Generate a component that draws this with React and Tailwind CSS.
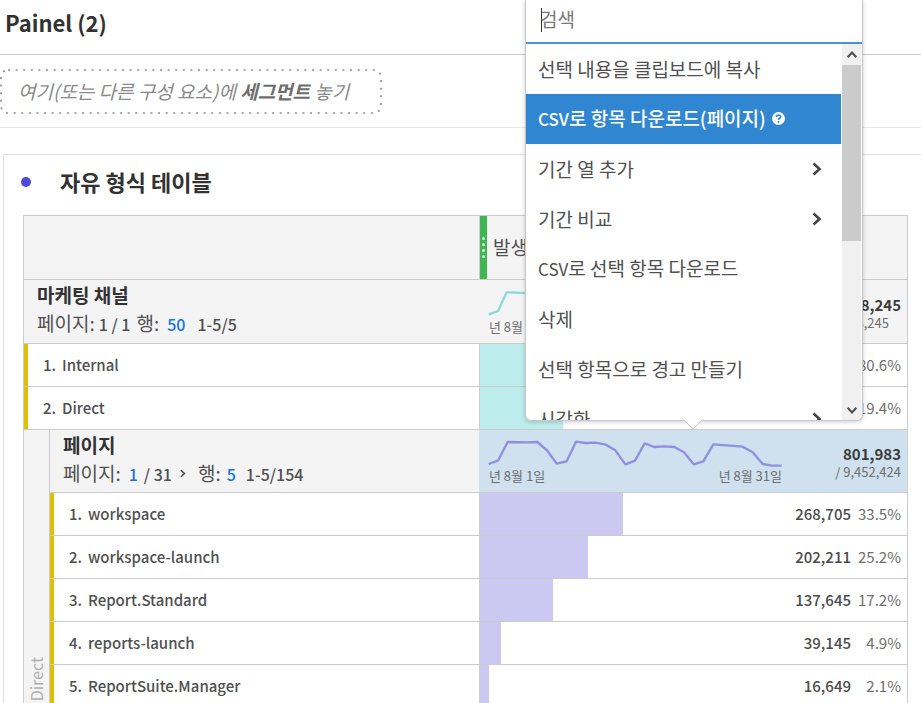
import React from 'react';

const LINE = 'border-[#cccccc]';

function Chevron({ className }) {
  return (
    <svg className={className} viewBox="0 0 10 14" fill="none" stroke="currentColor" strokeWidth="2.6" aria-hidden="true">
      <path d="M1.5 1.5 L7.5 7 L1.5 12.5" />
    </svg>
  );
}

function HelpIcon() {
  return (
    <svg className="h-[13px] w-[13px]" viewBox="0 0 13 13" aria-hidden="true">
      <circle cx="6.5" cy="6.5" r="6.5" fill="white" />
      <path d="M4.4 5 C4.4 2.4 8.7 2.5 8.6 4.9 C8.5 6.3 6.6 6.2 6.5 7.9" fill="none" stroke="#3186d2" strokeWidth="1.6" />
      <circle cx="6.5" cy="10" r="1" fill="#3186d2" />
    </svg>
  );
}

function ValueCell({ count, percent, color }) {
  return (
    <td className={`relative border-t border-l p-0 ${LINE}`}>
      <div className={`absolute inset-y-0 left-0 ${color}`} style={{ width: `${percent}%` }} />
      <div className="relative flex justify-end pr-1.5 text-[15px] leading-6">
        <span className="font-medium text-[#4b4b4b]">{count}</span>
        <span className="w-[50px] text-right text-[#6e6e6e]">{percent.toFixed(1)}%</span>
      </div>
    </td>
  );
}

function RowName({ index, name, colSpan }) {
  return (
    <th scope="row" colSpan={colSpan} className={`border-t border-l p-0 text-left font-medium ${LINE}`}>
      <div className="flex h-[42px] items-center border-l-4 border-[#e0bf00] text-[15px] leading-6">
        <span className="w-[34px] pr-1.5 text-right">{index}.</span>
        <span>{name}</span>
      </div>
    </th>
  );
}

function Trend({ points, color, total, outOf, outOfClass }) {
  return (
    <div className="flex justify-between pr-1.5 pb-1 pl-2">
      <div className="flex w-[294px] flex-col pt-1 text-[#6e6e6e]">
        <svg className="h-[30px] w-[294px]" viewBox="84 114 882 90" fill="none" stroke={color} strokeWidth="7" strokeLinejoin="round" aria-hidden="true">
          <polyline points={points} />
        </svg>
        <div className="flex justify-between pl-px text-[13px] leading-4">
          <span>년 8월 1일</span>
          <span>년 8월 31일</span>
        </div>
      </div>
      <div className="flex flex-col justify-end pb-1 text-right whitespace-nowrap">
        <span className="text-[15px] leading-5 font-bold text-[#3c3c3c]">{total}</span>
        <span className={`text-[13px] leading-4 text-[#6e6e6e] ${outOfClass}`}>{outOf}</span>
      </div>
    </div>
  );
}

const pageRows = [
  ['workspace', '268,705', 33.5],
  ['workspace-launch', '202,211', 25.2],
  ['Report.Standard', '137,645', 17.2],
  ['reports-launch', '39,145', 4.9],
  ['ReportSuite.Manager', '16,649', 2.1],
];

const menuItems = [
  { label: '선택 내용을 클립보드에 복사' },
  { format: 'CSV', label: '로 항목 다운로드(페이지)', active: true },
  { label: '기간 열 추가', sub: true },
  { label: '기간 비교', sub: true },
  { format: 'CSV', label: '로 선택 항목 다운로드' },
  { label: '삭제' },
  { label: '선택 항목으로 경고 만들기' },
  { label: '시각화', sub: true },
];

function ContextMenu() {
  return (
    <div className="absolute top-0 left-[525px] w-[338px] rounded-b-md border border-t-0 border-[#c8c8c8] bg-white shadow-[0_1px_4px_rgba(0,0,0,0.2)]">
      <div className="relative border-b-2 border-[#4a90e2]">
        <input
          aria-label="검색"
          placeholder="검색"
          className="block h-[42px] w-full bg-transparent px-[14px] pb-1.5 text-[19px] leading-6 text-[#505050] outline-none placeholder:text-[#7a7a7a]"
        />
        <span className="absolute top-2 left-[15px] h-6 w-px bg-[#333]" />
      </div>
      <div className="flex h-[376px] overflow-hidden rounded-b-md">
        <ul className="h-full flex-1 overflow-hidden" role="menu">
          {menuItems.map((item) => (
            <li key={item.label} role="none">
              <button
                type="button"
                role="menuitem"
                className={`flex h-[50px] w-full items-center justify-between pr-[19px] pl-3 text-left text-[19px] leading-6 ${
                  item.active ? 'bg-[#3186d2] font-medium text-white' : 'text-[#505050]'
                }`}
              >
                <span className="flex items-center gap-1.5 pb-px whitespace-nowrap">
                  <span>
                    {item.format && <span className="text-[17px] leading-6">{item.format}</span>}
                    {item.label}
                  </span>
                  {item.active && <HelpIcon />}
                </span>
                {item.sub && <Chevron className="h-[14px] w-[10px] text-[#444]" />}
              </button>
            </li>
          ))}
        </ul>
        <div className="mr-px ml-px flex w-[19px] flex-col bg-[#f0f0f0] text-[#505050]" aria-hidden="true">
          <div className="flex h-[21px] items-center justify-center">
            <Chevron className="h-[11px] w-2 -rotate-90" />
          </div>
          <div className="h-[176px] bg-[#cbcbcb]" />
          <div className="mt-auto flex h-5 items-center justify-center">
            <Chevron className="h-[11px] w-2 rotate-90" />
          </div>
        </div>
      </div>
      <svg className="absolute top-full left-[156px] -mt-px h-[11px] w-[22px]" viewBox="0 0 22 11" aria-hidden="true">
        <path d="M0 0 H22 V1 L19 2 L11 10 L3 2 L0 1 Z" fill="white" />
        <path d="M0 1 Q2 1 3 2 L11 10 L19 2 Q20 1 22 1" fill="none" stroke="#c8c8c8" />
      </svg>
    </div>
  );
}

export default function App() {
  return (
    <div className="relative h-screen overflow-hidden bg-white font-['Noto_Sans_CJK_KR',sans-serif] text-[#505050]">
      <header className="flex h-[55px] items-center border-b border-[#cccccc] pb-2.5 pl-[5px]">
        <h1 className="text-[22px] leading-8 font-bold text-[#323232]">Painel (2)</h1>
      </header>
      <div className="flex h-[73px] items-center border-b border-[#e8e8e8]">
        <div className="relative flex h-[45px] w-[382px] items-center pl-[18px] text-[19px] leading-6 whitespace-nowrap text-[#8a8a8a] italic">
          <svg className="absolute inset-0 h-full w-full" fill="none" aria-hidden="true">
            <rect x="1" y="1" width="380" height="43" rx="7" stroke="#8a8a8a" strokeWidth="1.6" strokeDasharray="2 5.6" />
          </svg>
          <p>
            여기(또는 다른 구성 요소)에 <strong className="font-bold text-[#6e6e6e]">세그먼트</strong> 놓기
          </p>
        </div>
      </div>

      <section className="mt-[26px] ml-[3px] border-t border-l border-[#e0e0e0] pr-[13px] pl-[19px]">
        <div className="flex h-[60px] items-center pb-1.5">
          <span className="-ml-[2px] h-[10px] w-[10px] rounded-full bg-[#4b4bd8]" />
          <h2 className="ml-[29px] pb-0.5 text-[22px] leading-8 font-bold text-[#323232]">자유 형식 테이블</h2>
        </div>

        <table className={`w-full table-fixed border-separate border-spacing-0 border-r border-b ${LINE}`}>
          <colgroup>
            <col className="w-[26px]" />
            <col />
            <col className="w-[428px]" />
          </colgroup>
          <thead>
            <tr className="h-16 bg-[#f4f4f4]">
              <td colSpan={2} className={`border-t border-l ${LINE}`} />
              <th scope="col" className={`border-t border-l p-0 text-left font-normal ${LINE}`}>
                <div className="flex h-[63px] items-center text-[19px] leading-6">
                  <span className="flex h-full w-[7px] flex-col items-center justify-center gap-[3px] bg-[#40b551]">
                    {[0, 1, 2, 3].map((dot) => (
                      <span key={dot} className="h-[3px] w-[3px] rounded-full bg-[#d5f5d9]" />
                    ))}
                  </span>
                  <span className="ml-1.5 pb-0.5">발생</span>
                </div>
              </th>
            </tr>
          </thead>
          <tbody>
            <tr className="h-16 bg-[#f4f4f4]">
              <th scope="rowgroup" colSpan={2} className={`border-t border-l p-0 pb-1 pl-[13px] text-left font-normal ${LINE}`}>
                <div className="text-[19px] leading-7 font-bold text-[#323232]">마케팅 채널</div>
                <div className="flex items-baseline text-base leading-7">
                  <span className="text-[19px]">페이지:</span>
                  <span className="ml-1 font-medium">1 / 1</span>
                  <span className="ml-1.5 text-[19px]">행:</span>
                  <a href="#rows" className="ml-2 font-medium text-[#1473e6]">50</a>
                  <span className="ml-3 font-medium">1-5/5</span>
                </div>
              </th>
              <td className={`border-t border-l border-l-[#f4f4f4] p-0 ${LINE}`}>
                <Trend
                  points="86,190 114,180 140,124 170,125 230,128 262,150 290,190 320,180 348,124 435,130 466,150 496,190 525,180 554,126 643,132 672,154 701,190 730,180 760,128 848,134 878,154 908,190 964,196"
                  color="#86dcdc"
                  total="4,138,245"
                  outOf="/ 4,138,245"
                  outOfClass="pr-3"
                />
              </td>
            </tr>
            <tr className="h-[43px]">
              <RowName index={1} name="Internal" colSpan={2} />
              <ValueCell count="3,336,262" percent={80.6} color="bg-[#bcecec]" />
            </tr>
            <tr className="h-[43px]">
              <RowName index={2} name="Direct" colSpan={2} />
              <ValueCell count="801,983" percent={19.4} color="bg-[#bcecec]" />
            </tr>
            <tr className="h-[63px]">
              <th scope="rowgroup" rowSpan={6} className={`border-t border-l bg-[#f4f4f4] p-0 pb-1.5 align-bottom font-normal ${LINE}`}>
                <span className="block rotate-180 text-base leading-6 text-[#b0b0b0] [writing-mode:vertical-rl]">Direct</span>
              </th>
              <th scope="rowgroup" className={`border-t border-l bg-[#f4f4f4] p-0 pb-1 pl-[13px] text-left font-normal ${LINE}`}>
                <div className="text-[19px] leading-7 font-bold text-[#323232]">페이지</div>
                <div className="flex items-baseline text-base leading-7">
                  <span className="text-[19px]">페이지:</span>
                  <a href="#page" className="ml-2 font-medium text-[#1473e6]">1</a>
                  <span className="ml-1.5 font-medium">/ 31</span>
                  <Chevron className="ml-2 h-[9px] w-[6px] self-center" />
                  <span className="ml-3 text-[19px]">행:</span>
                  <a href="#rows" className="ml-1.5 font-medium text-[#1473e6]">5</a>
                  <span className="ml-2.5 font-medium">1-5/154</span>
                </div>
              </th>
              <td className="border-t border-l border-t-[#cccccc] border-l-[#cfe0ee] bg-[#cfe0ee] p-0">
                <Trend
                  points="86,192 114,182 143,126 205,127 232,126 260,150 290,191 320,184 348,125 378,129 406,128 435,133 466,151 496,193 525,182 554,130 583,141 612,139 643,141 672,157 701,193 730,184 760,133 848,140 878,157 908,192 935,197 965,197"
                  color="#9090e0"
                  total="801,983"
                  outOf="/ 9,452,424"
                  outOfClass=""
                />
              </td>
            </tr>
            {pageRows.map(([name, count, percent], i) => (
              <tr key={name} className="h-[43px]">
                <RowName index={i + 1} name={name} />
                <ValueCell count={count} percent={percent} color="bg-[#cbc9f1]" />
              </tr>
            ))}
          </tbody>
        </table>
      </section>

      <ContextMenu />
    </div>
  );
}
